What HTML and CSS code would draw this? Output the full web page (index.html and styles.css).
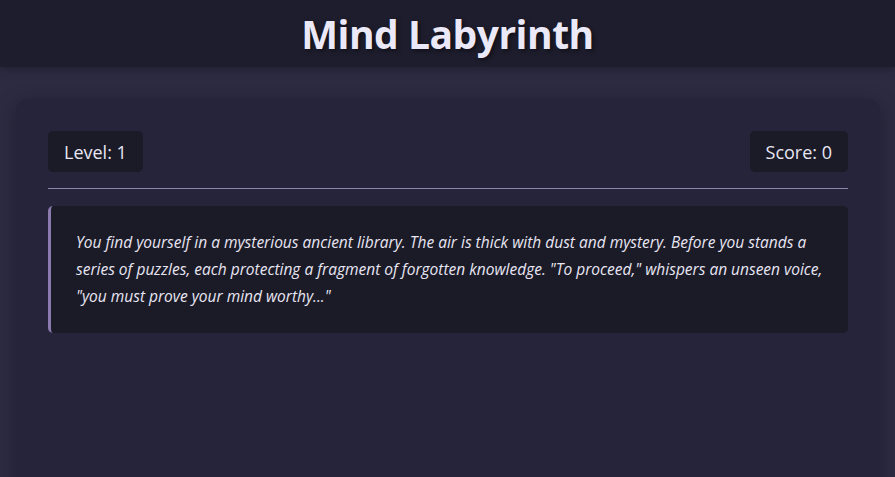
FILE: index.html
```html
<!DOCTYPE html>
<html lang="en">
<head>
<meta charset="utf-8">
<title>Mind Labyrinth</title>
<link rel="stylesheet" href="styles.css">
</head>
<body>
<header class="site-header">
  <h1 class="title">Mind Labyrinth</h1>
</header>
<main class="page">
  <section class="game">
    <div class="stats">
      <div class="stat">Level: 1</div>
      <div class="stat">Score: 0</div>
    </div>
    <hr class="divider">
    <div class="story">
      <p>You find yourself in a mysterious ancient library. The air is thick with dust and mystery. Before you stands a series of puzzles, each protecting a fragment of forgotten knowledge. "To proceed," whispers an unseen voice, "you must prove your mind worthy..."</p>
    </div>
  </section>
</main>
</body>
</html>
```
FILE: styles.css
```css
* { box-sizing: border-box; }
html, body { margin: 0; padding: 0; }
body {
  background: #2d2b42;
  color: #e8e6f3;
  font-family: "Open Sans", "Noto Sans", sans-serif;
  min-height: 100vh;
}
.site-header {
  background: #1e1d2d;
  height: 67px;
  display: flex;
  align-items: center;
  justify-content: center;
  box-shadow: 0 2px 10px rgba(0,0,0,0.3);
}
.title {
  margin: 0;
  font-size: 39px;
  font-weight: 700;
  color: #ebe9f7;
  text-shadow: 2px 2px 4px rgba(0,0,0,0.5);
  letter-spacing: -0.5px;
}
.page {
  padding: 32px 15px 0 16px;
}
.game {
  background: #25243a;
  border-radius: 12px;
  padding: 32px;
  min-height: 400px;
  box-shadow: 0 4px 20px rgba(0,0,0,0.3);
}
.stats {
  display: flex;
  justify-content: space-between;
}
.stat {
  background: #1b1a27;
  border-radius: 5px;
  padding: 0 16px;
  height: 41px;
  display: flex;
  align-items: center;
  font-size: 18px;
}
.divider {
  border: none;
  height: 1px;
  background: #8d84a8;
  margin: 16px 0 17px;
}
.story {
  background: #1b1a27;
  border-left: 3px solid #8a7aad;
  border-radius: 5px;
  padding: 23px 24px 23px 25px;
}
.story p {
  margin: 0;
  font-style: italic;
  font-size: 15.5px;
  line-height: 27px;
}
```
